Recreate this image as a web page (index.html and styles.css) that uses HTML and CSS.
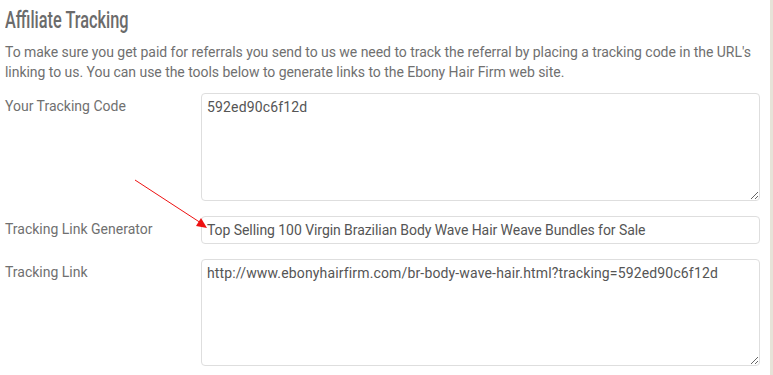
FILE: index.html
```html
<!DOCTYPE html>
<html>
<head>
<meta charset="utf-8">
<link rel="stylesheet" href="styles.css">
</head>
<body>
<div class="page">
  <div class="content">
    <h1 class="title">Affiliate Tracking</h1>
    <p class="intro">To make sure you get paid for referrals you send to us we need to track the referral by placing a tracking code in the URL's linking to us. You can use the tools below to generate links to the Ebony Hair Firm web site.</p>
    <div class="form">
      <label class="label">Your Tracking Code</label>
      <textarea class="field area">592ed90c6f12d</textarea>
      <label class="label">Tracking Link Generator</label>
      <input class="field line" type="text" value="Top Selling 100 Virgin Brazilian Body Wave Hair Weave Bundles for Sale">
      <label class="label">Tracking Link</label>
      <textarea class="field area area2">http://www.ebonyhairfirm.com/br-body-wave-hair.html?tracking=592ed90c6f12d</textarea>
    </div>
  </div>
  <div class="edge"></div>
  <svg class="arrow" width="773" height="375" viewBox="0 0 773 375">
    <line x1="135" y1="180" x2="201" y2="223" stroke="#ee1111" stroke-width="1"/>
    <polygon points="207,228 196,226 201,218" fill="#ee1111"/>
  </svg>
</div>
</body>
</html>
```
FILE: styles.css
```css
html, body {
  margin: 0;
  padding: 0;
  background: #fff;
}
.page {
  position: relative;
  width: 773px;
  height: 375px;
  display: flex;
  overflow: hidden;
}
.content {
  width: 755px;
  padding: 0 10px 0 5px;
  background: #fff;
}
.edge {
  width: 3px;
  background: #e6e3d8;
}
.title {
  margin: 0;
  padding-top: 6px;
  height: 32px;
  font-family: "Roboto", sans-serif;
  font-weight: 500;
  font-size: 24px;
  line-height: 28px;
  color: #6b6b6b;
  transform: scaleX(0.68);
  transform-origin: left center;
  white-space: nowrap;
}
.intro {
  margin: 4px 0 0 0;
  font-family: "Roboto", sans-serif;
  font-size: 14px;
  line-height: 20px;
  color: #707070;
  letter-spacing: -0.04px;
}
.form {
  margin-top: 11px;
  display: grid;
  grid-template-columns: 196px 559px;
  row-gap: 15px;
}
.label {
  font-family: "Roboto", sans-serif;
  font-size: 14px;
  line-height: 20px;
  color: #707070;
  padding-top: 3px;
}
.field {
  box-sizing: border-box;
  width: 559px;
  border: 1px solid #dedede;
  border-radius: 4px;
  font-family: "Roboto", sans-serif;
  font-size: 14px;
  line-height: 20px;
  color: #555;
  padding: 3px 5px;
  margin: 0;
  background: #fff;
  outline: none;
}
.area {
  height: 108px;
  resize: vertical;
  letter-spacing: 0.15px;
}
.area2 {
  height: 107px;
}
.line {
  height: 28px;
  letter-spacing: -0.06px;
}
.arrow {
  position: absolute;
  left: 0;
  top: 0;
  pointer-events: none;
}
```
